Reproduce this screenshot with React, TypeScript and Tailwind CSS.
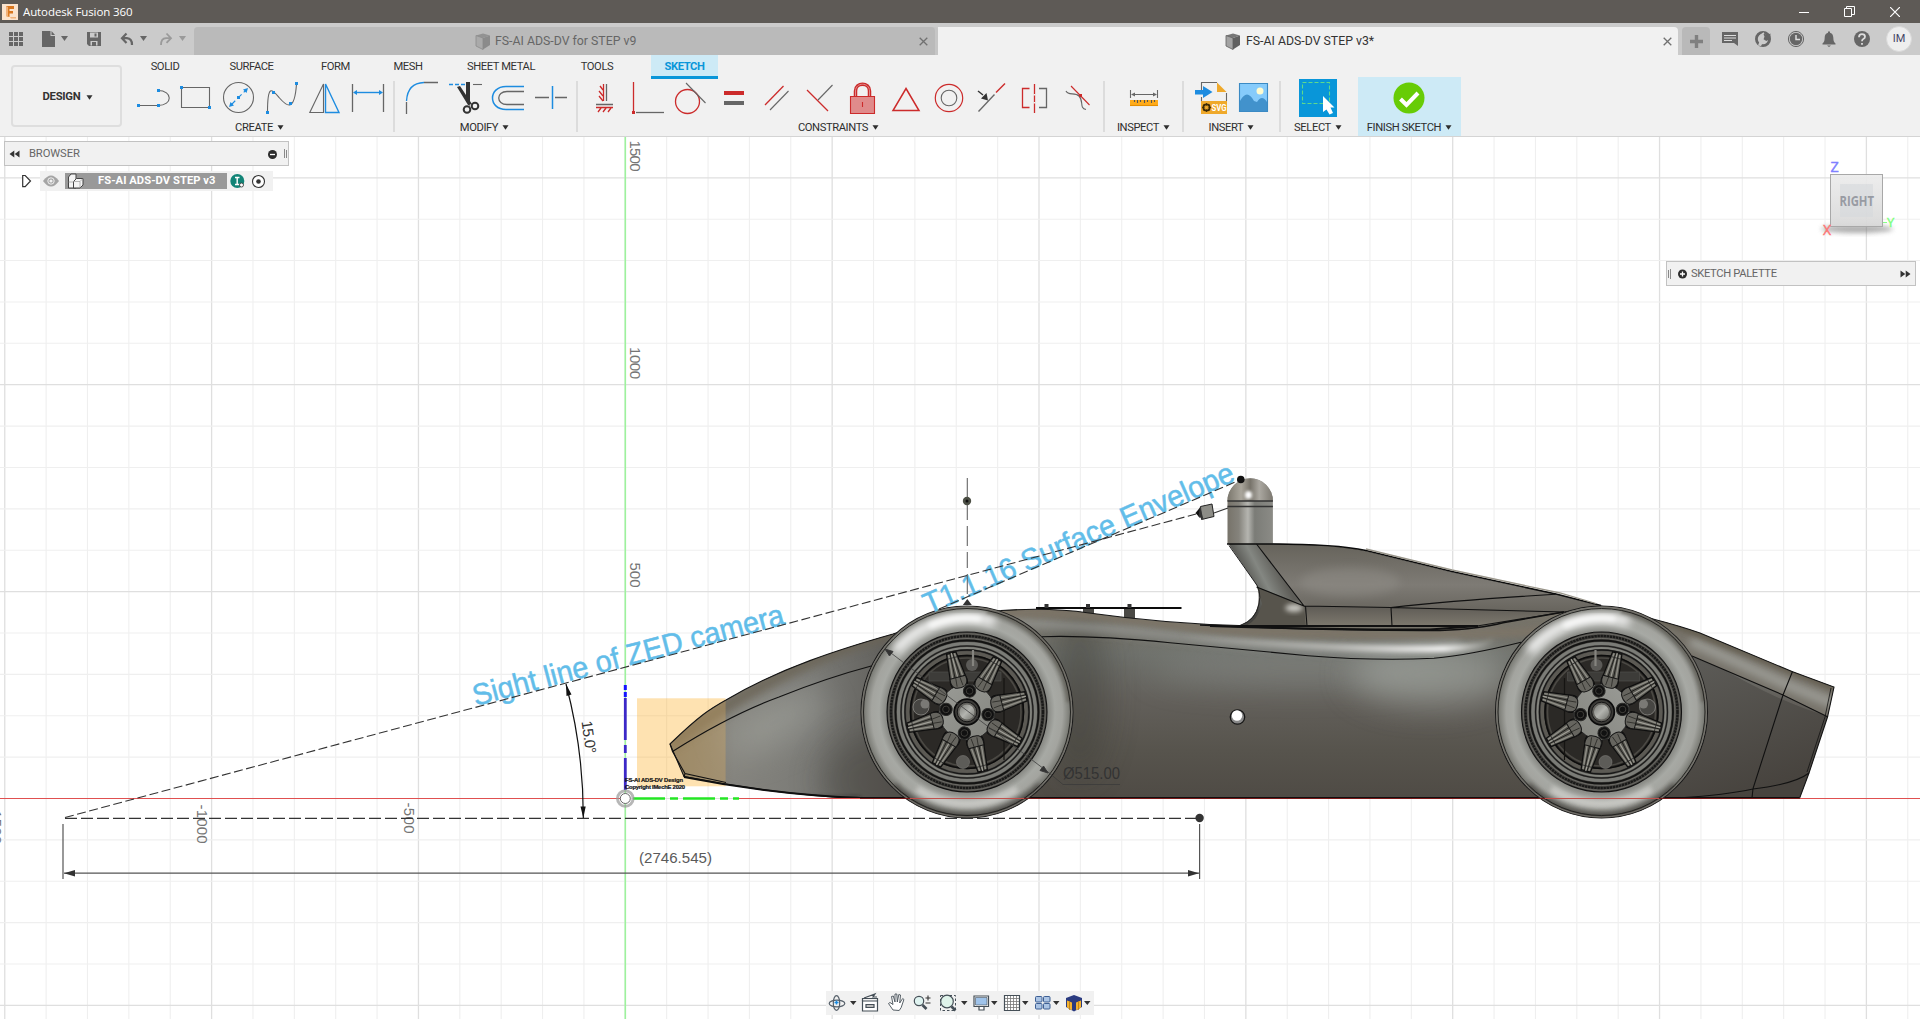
import React from "react";

const G = "#666666";
const B = "#1d8ce0";
const R = "#cc2b2b";

function Caret({ className = "" }: { className?: string }) {
  return <svg className={className} width="7" height="5" viewBox="0 0 7 5"><path d="M0.5 0.3h6L3.5 4.7z" fill="currentColor" /></svg>;
}

/* Icon cell whose local coordinates continue those of its neighbours in the ribbon */
function Cell({ x, w = 43, children }: { x: number; w?: number; children: React.ReactNode }) {
  return (
    <svg className="shrink-0" width={w} height="44" viewBox={`${x} 76 ${w} 44`} fill="none" strokeWidth="1.1">
      {children}
    </svg>
  );
}

const Dot = ({ x, y, c = B }: { x: number; y: number; c?: string }) => <rect x={x - 1.5} y={y - 1.5} width="3" height="3" fill={c} />;

function GroupLabel({ children }: { children: string }) {
  return (
    <div className="flex h-4 items-center justify-center gap-1 whitespace-nowrap text-[11.2px] leading-4 tracking-[-0.4px] text-[#2e2e2e]">
      <span>{children}</span>
      <Caret className="mb-0.5 shrink-0" />
    </div>
  );
}

function Group({ label, className, pad, labelPad = "", children }: { label: string; className: string; pad: string; labelPad?: string; children: React.ReactNode }) {
  return (
    <div className={`flex shrink-0 flex-col ${className}`}>
      <div className={`flex h-11 ${pad}`}>{children}</div>
      <div className={labelPad}><GroupLabel>{label}</GroupLabel></div>
    </div>
  );
}

const Sep = () => <div className="mt-[5px] h-[51px] w-0.5 shrink-0 bg-[#dcdcdc]" />;

function TitleBar() {
  return (
    <div className="flex h-[23px] items-center justify-between bg-[#5e5a56] text-white">
      <div className="flex items-center gap-[5px] pl-0.5 font-['Open_Sans',sans-serif] text-[11.5px] tracking-[-0.1px]">
        <svg width="16" height="16" viewBox="0 0 16 16">
          <rect width="16" height="16" fill="#fbe3cd" />
          <path d="M4 2h8v3H7.500v2H11v2.500H7.500V13L4 12z" fill="#d9771f" />
          <path d="M4 2l2 1v10l-2-1zM8 13h6v1.500H9z" fill="#f2b27a" />
        </svg>
        <span>Autodesk Fusion 360</span>
      </div>
      <div className="flex items-center gap-[35px] pr-5">
        <svg width="10" height="11" viewBox="0 0 10 11"><path d="M0 6.500h10" stroke="#fff" /></svg>
        <svg width="11" height="11" viewBox="0 0 11 11" fill="none" stroke="#fff"><path d="M.5 2.500h7v8h-7zM2.500 2.500v-2h8v8h-3" /></svg>
        <svg width="10" height="10" viewBox="0 0 10 10"><path d="M0 0l10 10M10 0L0 10" stroke="#fff" strokeWidth="1.200" /></svg>
      </div>
    </div>
  );
}

const Cube = ({ light, dark }: { light: string; dark: string }) => (
  <svg width="16" height="17" viewBox="0 0 16 17">
    <path d="M1 2.500L8 5v11.500L1 13z" fill={light} />
    <path d="M8 5l7-2.500V12L8 16.500z" fill={dark} />
    <path d="M1 2.500L8 .5l7 2L8 5z" fill={dark} opacity=".85" />
    <path d="M1 2.500L8 5v11.500L1 13z" fill="none" stroke={dark} strokeWidth=".8" />
  </svg>
);
const Close = () => <svg width="9" height="9" viewBox="0 0 9 9"><path d="M.7.7l7.600 7.600M8.300.7L.7 8.300" stroke="#707070" strokeWidth="1.300" /></svg>;

function TabBar() {
  return (
    <div className="flex h-8 bg-[#cbcbcb] text-[#666]">
      <svg className="shrink-0" width="194" height="32" viewBox="0 23 194 32" fill="none">
        {[9, 14, 19].map((x) => [32, 37, 42].map((y) => <rect key={`${x}${y}`} x={x} y={y} width="4" height="4" fill={G} />))}
        <path d="M42 31h8.500v5H55v11H42z M51.500 31l3.500 4h-3.500z" fill={G} />
        <path d="M61 36h7l-3.500 5z" fill={G} />
        <path d="M87 32h14v14H89l-2-2z" fill={G} />
        <path d="M90 32.500h8v5h-8zM90.500 45.500v-4.500h7v4.500" fill="#cbcbcb" />
        <path d="M94.500 33.500h2v3h-2zM92 42h4v4h-4z" fill={G} />
        <path d="M126.500 33.500l-4.500 4.700 4.500 4.700M122.500 38.200h4.500q5 .3 5 6.800" stroke={G} strokeWidth="2.200" />
        <path d="M140 36h7l-3.500 5z" fill={G} />
        <path d="M166.500 33.500l4.500 4.700-4.500 4.700M170.500 38.200h-4.500q-5 .3-5 6.800" stroke="#9a9a9a" strokeWidth="1.800" />
        <path d="M179 36h7l-3.500 5z" fill="#9a9a9a" />
      </svg>
      <div className="mt-1 flex h-7 w-[744px] shrink-0 rounded-t bg-[#c6c6c6]">
        <div className="flex w-[741px] items-center rounded-t bg-[#bababa] pl-[281px]">
          <div className="flex items-center gap-1 text-[12.3px]"><Cube light="#aaaaaa" dark="#8b8b8b" /><span className="whitespace-nowrap text-[#666]">FS-AI ADS-DV for STEP v9</span></div>
          <div className="ml-auto pr-[7px]"><Close /></div>
        </div>
      </div>
      <div className="mt-1 flex h-7 w-[740px] shrink-0 items-center rounded-tr bg-[#f1f1f1] pl-[287px]">
        <div className="flex items-center gap-[5px] text-[12.3px]"><Cube light="#a3a3a3" dark="#606060" /><span className="whitespace-nowrap text-[#333]">FS-AI ADS-DV STEP v3*</span></div>
        <div className="ml-auto pr-[6px]"><Close /></div>
      </div>
      <div className="ml-1 mt-1 flex h-7 w-7 shrink-0 items-center justify-center rounded-t bg-[#b9b9b9]">
        <svg width="14" height="14" viewBox="0 0 14 14"><path d="M7.500 1v13M1 7.500h13" stroke="#808080" strokeWidth="3.400" /></svg>
      </div>
      <svg className="shrink-0" width="170" height="32" viewBox="1710 23 170 32" fill="none">
        <path d="M1722 32h16v14l-4-3h-12z" fill={G} />
        <path d="M1724 35.500h12M1724 38h12M1724 40.500h8" stroke="#ddd" />
        <circle cx="1763" cy="39" r="6.600" stroke={G} strokeWidth="2.800" />
        <path d="M1763 33l1.500 3.500-1 3 3 1.500 3.500-2 .5-5.500-3.500 1.500z" fill={G} />
        <path d="M1758 45.500l2.500-6.500 4 .8-3.500 6.200z" fill="#cbcbcb" />
        <path d="M1759 39.500l2-4.500 3-2.200" stroke="#cbcbcb" strokeWidth="1.600" />
        <circle cx="1796" cy="39" r="7.600" stroke={G} strokeWidth="1" />
        <circle cx="1796" cy="39" r="6.200" fill={G} /><path d="M1796 35v4.500h4" stroke="#ddd" strokeWidth="1.500" />
        <path d="M1822.500 43.500c2-1.500 2-3 2.200-6 .3-3.500 2-4.500 3.300-4.800v-1.200h2v1.200c1.500.3 3 1.300 3.300 4.800.2 3 .2 4.500 2.200 6v1h-13zM1827 45.500h4l-2 1.500z" fill={G} />
        <circle cx="1862" cy="39" r="8" fill={G} />
        <path d="M1859 37.200q0-3 3-3t3 2.500q0 1.500-1.700 2.300-1.300.7-1.300 2.300M1862 43v1.800" stroke="#ddd" strokeWidth="1.800" />
      </svg>
      <div className="ml-[6px] mt-[3px] flex h-[26px] w-[26px] shrink-0 items-center justify-center rounded-full border border-[#d9d9d9] bg-[#eeeeee] text-[11px] text-[#446]">IM</div>
    </div>
  );
}

function Ribbon() {
  return (
    <div className="flex h-[82px] border-b border-[#d4d4d4] bg-[#f1f1f1]">
      <div className="flex w-[132px] shrink-0 pl-[11px] pt-[10px]">
        <div className="flex h-[62px] w-[111px] items-center justify-center gap-1.5 rounded border-2 border-[#dedede] pl-[3px] pt-0.5 text-[11.3px] font-bold tracking-[-0.3px] text-[#333]">
          <span>DESIGN</span><Caret />
        </div>
      </div>
      <div className="flex flex-col">
        <div className="flex h-6 items-stretch text-[11.2px] tracking-[-0.4px] text-[#333]">
          <span className="w-[66px] pt-1 text-center">SOLID</span>
          <span className="w-[107px] pt-1 text-center">SURFACE</span>
          <span className="w-[61px] pt-1 text-center">FORM</span>
          <span className="w-[84px] pt-1 text-center">MESH</span>
          <span className="w-[102px] pt-1 text-center">SHEET METAL</span>
          <span className="w-[90px] pt-1 text-center">TOOLS</span>
          <span className="ml-[9px] w-[67px] border-b-[3px] border-[#0996d9] bg-[#cdeaf6] pt-1 text-center font-bold text-[#0996d9]">SKETCH</span>
        </div>
        <div className="-mt-[3px] flex h-[60px]">
          <Group label="CREATE" className="w-[261px]" pad="" labelPad="pr-1.5">
            <Cell x={132}>
              <path d="M138 105.500h20c15 0 15-15 0-15" stroke={G} /><Dot x={138.500} y={105.500} /><Dot x={158.500} y={105.500} /><Dot x={158.500} y={90.500} />
            </Cell>
            <Cell x={175}><path d="M181.500 87.500h28v20h-28z" stroke={G} /><Dot x={181.500} y={87.500} /><Dot x={209.500} y={107.500} /></Cell>
            <Cell x={218}>
              <circle cx="238.500" cy="97.500" r="15" stroke={G} /><path d="M231 105l15-15" stroke={B} strokeDasharray="6 3" />
              <path d="M248 88l-1.500 5-3.500-3.500zM229 107l1.500-5 3.500 3.500z" fill={B} /><Dot x={238.500} y={97.500} />
            </Cell>
            <Cell x={261}><path d="M267.500 112c0-30 5-22 12-14s15 15 17-14" stroke={G} /><Dot x={267.500} y={112.500} /><Dot x={273.500} y={92.500} /><Dot x={290.500} y={103.500} /><Dot x={296.500} y={83.500} /></Cell>
            <Cell x={304}><path d="M323.500 84v28.500h-13.700z" stroke={G} /><path d="M325.500 84v28.500H339z" stroke={B} strokeWidth="1.400" /></Cell>
            <Cell x={347}><path d="M352.500 84v28M383.500 84v28" stroke={G} strokeWidth="1.300" /><path d="M355 92.500h26" stroke={B} strokeWidth="1.400" /><path d="M353 92.500l4-2.500v5zM383 92.500l-4-2.500v5z" fill={B} /></Cell>
          </Group>
          <Sep />
          <Group label="MODIFY" className="w-[181px]" pad="pl-[5px]" labelPad="pr-0.5">
            <Cell x={400}><path d="M406.500 114v-12M424 82.500h14" stroke={G} strokeWidth="1.300" /><path d="M406.500 101q1-18 17.500-18.500" stroke={B} strokeWidth="1.300" /></Cell>
            <Cell x={443}>
              <path d="M449 84.500h19" stroke={B} strokeWidth="1.300" strokeDasharray="4 2" /><path d="M473 84.500h9" stroke={G} />
              <path d="M457 87l3-1 12 18-4 1zM466 82h4v24l-4-4z" fill="#333" />
              <circle cx="467" cy="109.500" r="3.300" stroke="#333" strokeWidth="2" /><circle cx="475" cy="106" r="3.300" stroke="#333" strokeWidth="2" />
            </Cell>
            <Cell x={486}><path d="M524 86.500h-18c-18 0-18 23 0 23h18" stroke={B} strokeWidth="1.500" /><path d="M524 91.500h-17c-11 0-11 13 0 13h17" stroke={G} strokeWidth="1.300" /></Cell>
            <Cell x={529}><path d="M535 97.500h14M555 97.500h12" stroke={G} strokeWidth="1.300" /><path d="M552.500 86v23" stroke={B} strokeWidth="1.500" /></Cell>
          </Group>
          <Sep />
          <Group label="CONSTRAINTS" className="w-[525px]" pad="pl-[3px]" labelPad="pr-1">
            <Cell x={581}><path d="M603.500 84v17" stroke={R} strokeWidth="1.300" /><path d="M606.500 84v17M596 104.500h17" stroke={G} strokeWidth="1.300" /><path d="M596 107.500h17M600 86l3 4M599 91l4 5M599 96l4 5M598 112l3-4M603 112l3-4M608 112l3-4" stroke={R} strokeWidth="1.300" /></Cell>
            <Cell x={624}><path d="M633.500 82v29" stroke={R} strokeWidth="1.300" /><path d="M636 112.500h28" stroke={G} strokeWidth="1.300" /><Dot x={633.500} y={112.500} c={R} /></Cell>
            <Cell x={667}><circle cx="687.500" cy="101.500" r="12" stroke={R} strokeWidth="1.300" /><path d="M686 83l19.500 20" stroke={G} /></Cell>
            <Cell x={710}><path d="M724 91h20v4h-20z" fill={R} /><path d="M724 101h20v4h-20z" fill={G} /></Cell>
            <Cell x={753}><path d="M765 105l18.500-19" stroke={R} strokeWidth="1.300" /><path d="M770 110l18.500-19" stroke={G} /></Cell>
            <Cell x={796}><path d="M807 90l21 21" stroke={R} strokeWidth="1.300" /><path d="M818 100l14.500-15" stroke={G} /></Cell>
            <Cell x={839}><path d="M850.500 96.500h24v17h-24z" fill="#e08b8b" stroke={R} /><path d="M855.500 96v-5c0-9 14-9 14 0v5" stroke={R} strokeWidth="3.500" /><path d="M855.500 96v-5c0-9 14-9 14 0v5" stroke="#e08b8b" strokeWidth="1" /><path d="M862.500 102v5" stroke={R} /></Cell>
            <Cell x={882}><path d="M906 88.500l13 22h-26z" stroke={R} strokeWidth="1.500" /></Cell>
            <Cell x={925}><circle cx="949" cy="98" r="13.700" stroke={R} strokeWidth="1.200" /><circle cx="949" cy="98" r="7.800" stroke={G} /></Cell>
            <Cell x={968}><path d="M978.500 111.500l16-17" stroke={G} strokeWidth="1.300" /><path d="M996 92.500l9-9" stroke={R} strokeWidth="1.400" /><path d="M978 91l5 4" stroke="#333" strokeWidth="1.500" /><path d="M988 100.500l-7-2 5.500-5.500z" fill="#333" /></Cell>
            <Cell x={1011}><path d="M1029.500 88.500h-7v19h7M1034.500 84v29" stroke={R} strokeWidth="1.300" /><path d="M1034.500 94v1.500M1034.500 102v1.500" stroke="#f1f1f1" strokeWidth="2" /><path d="M1039 88.500h7.500v19h-7.500" stroke={G} strokeWidth="1.300" /></Cell>
            <Cell x={1054}><path d="M1066 91c2 5 9 1 13 5 5 5 0 12 7 13.500" stroke={G} /><path d="M1071 86l18.500 19" stroke={R} /><Dot x={1080.500} y={95.500} c={R} /></Cell>
          </Group>
          <Sep />
          <Group label="INSPECT" className="w-[77px]" pad="pl-[17px]">
            <Cell x={1122}><path d="M1130 100h28v6h-28z" fill="#ffab1a" /><path d="M1130 105.500h28" stroke="#e68f00" /><path d="M1130.500 90v8M1157.500 90v8M1133 94.500h22" stroke={G} /><path d="M1131 94.500l4-2v4zM1157 94.500l-4-2v4z" fill={G} /><path d="M1134.500 100v2M1137.500 100v3M1140.500 100v2M1144.500 100v3M1147.500 100v2M1151.500 100v3M1154.500 100v2" stroke="#555" /></Cell>
          </Group>
          <Sep />
          <Group label="INSERT" className="w-[95px]" pad="pl-1">
            <Cell x={1188}>
              <path d="M1201.500 90v-7.500H1217M1201.500 97v4M1226.500 93v8" stroke={G} /><path d="M1217 82.500l9.500 9.500h-9.500z" fill="#efa92b" />
              <path d="M1195 90h8v-4l9.500 6-9.500 6v-3.500h-8z" fill={B} /><path d="M1201 101h26v13h-26z" fill="#efa92b" />
              <circle cx="1206.500" cy="107.500" r="3.200" stroke="#3b2a05" strokeWidth="1.800" /><path d="M1206.500 103v9M1202 107.500h9M1203.500 104.500l6 6M1209.500 104.500l-6 6" stroke="#3b2a05" strokeWidth=".8" /><circle cx="1206.500" cy="107.500" r="1.800" fill="#efa92b" />
              <text x="1211.500" y="111" fontSize="8.500" fontWeight="700" fill="#fff" stroke="none" textLength="15" lengthAdjust="spacingAndGlyphs">SVG</text>
            </Cell>
            <Cell x={1231}><path d="M1239.500 83.500h28v28h-28z" fill="#86cbfb" /><path d="M1240 101q7-13 14 0l3 1q5-8 10 0v9h-27z" fill="#4292cc" /><circle cx="1260" cy="91" r="3.500" fill="#fffbd0" /><path d="M1239.500 83.500h28v28h-28z" stroke="#3b8ac4" /></Cell>
          </Group>
          <Sep />
          <Group label="SELECT" className="w-[76px]" pad="pl-[15px]" labelPad="pr-0.5">
            <Cell x={1296} w={44}><path d="M1299 79h38v38h-38z" fill="#0996d9" /><path d="M1302.500 82.500h27v21h-27z" stroke="#5fd98c" strokeDasharray="4 2" /><path d="M1323 96v16l3.500-2.500 3 5 3.500-1.500-2.500-5.500h4z" fill="#fff" /></Cell>
          </Group>
          <div className="ml-px mt-px flex h-[59px] w-[103px] shrink-0 flex-col items-center bg-[#cdeaf6]">
            <svg className="shrink-0" width="43" height="43" viewBox="1388 77 43 43"><circle cx="1409" cy="98" r="15.500" fill="#67cc06" /><path d="M1400.500 99l6 6 11.500-12" fill="none" stroke="#fff" strokeWidth="4" /></svg>
            <GroupLabel>FINISH SKETCH</GroupLabel>
          </div>
        </div>
      </div>
    </div>
  );
}

const range = (a: number, b: number) => Array.from({ length: b - a + 1 }, (_, i) => a + i);

function Grid() {
  return (
    <g>
      {range(-15, 31).map((i) => <line key={`v${i}`} x1={625.3 + i * 41.37} x2={625.3 + i * 41.37} y1="137" y2="1019" stroke={i % 5 === 0 ? "#dfdfdf" : "#efefef"} strokeWidth={i % 5 === 0 ? 1.3 : 1.1} />)}
      {range(-15, 5).map((i) => <line key={`h${i}`} y1={798.5 + i * 41.38} y2={798.5 + i * 41.38} x1="0" x2="1920" stroke={i % 5 === 0 ? "#dfdfdf" : "#efefef"} strokeWidth={i % 5 === 0 ? 1.2 : 1.1} />)}
      <path d="M625.300 137V1019" stroke="#9df29d" strokeWidth="1.600" />
    </g>
  );
}

function Wheel({ cx, flip }: { cx: number; flip?: boolean }) {
  return (
    <g transform={`translate(${cx} 712)`} fill="none">
      <circle r="106" fill="url(#tyre)" stroke="#1a1a1a" strokeWidth="1.100" />
      <g clipPath="url(#tyreClip)">
        <path d="M-72 -61A95 95 0 0 1 28 -90" stroke="#fff" strokeWidth="10" opacity=".85" filter="url(#b5)" />
        <path d="M-38 -86A94 94 0 0 1 14 -93" stroke="#fff" strokeWidth="6" opacity=".8" filter="url(#b3)" />
        <path d="M-50 77A92 92 0 0 0 50 77" stroke="#dededa" strokeWidth="7" opacity=".65" filter="url(#b3)" />
        <path d="M-75 75A106 106 0 0 0 75 75" stroke="#3d3b37" strokeWidth="11" opacity=".7" filter="url(#b3)" />
        <path d="M20 -102A104 104 0 0 1 103 -10" stroke="#5a5750" strokeWidth="7" opacity=".55" filter="url(#b2)" />
      </g>
      <circle r="103.500" stroke="#1c1c1a" strokeWidth=".9" />
      <circle r="105" stroke="#77756f" strokeWidth="1" />
      <circle r="80" fill="#4b4a46" stroke="#111" strokeWidth="1.100" />
      <circle r="78.300" stroke="#686762" strokeWidth="1" />
      <circle r="76" stroke="#191918" strokeWidth="2.500" strokeDasharray="2.500 .6" />
      <circle r="73.500" stroke="#6a6964" strokeWidth="1" />
      <circle r="71.500" stroke="#131312" strokeWidth="1.800" />
      <circle r="68.500" stroke="#7b7c77" strokeWidth="3.200" />
      <circle r="66" stroke="#1b1b1b" strokeWidth="1.100" />
      <circle r="64" stroke="#83847e" strokeWidth="1.800" />
      <circle r="62" stroke="#161616" strokeWidth="1.300" />
      <circle r="59" fill="#2b2926" stroke="#5c5a54" strokeWidth="3.500" />
      <circle r="56.500" stroke="#0c0c0c" strokeWidth="1.600" />
      <circle r="54" stroke="#4b4944" strokeWidth="1.600" />
      <g transform={flip ? "scale(-1 1)" : undefined}>
        <path d="M-38 -40h72v9h-72z" fill="#3d3c39" stroke="#4f4e4a" strokeWidth=".7" />
        <path d="M37 -34v82" stroke="#151412" strokeWidth="1.200" />
        <circle cx="-46" cy="-5" r="8" fill="#474643" stroke="#8a8985" strokeWidth=".8" /><circle cx="-42" cy="-8" r="4.500" fill="#7a7975" />
        <circle cx="5" cy="-47" r="6" fill="#5b5a57" /><path d="M6 -62v16" stroke="#85847f" strokeWidth="2.200" />
        <circle cx="-4" cy="50" r="6.500" fill="#5d5c58" stroke="#7c7b77" strokeWidth=".6" />
        {range(0, 7).map((k) => (
          <g key={k} transform={`rotate(${-15 + 45 * k})`}>
            <path d="M26 -7Q30 -9.500 35 -8L61 -4.800V4.800L35 8Q30 9.500 26 7z" fill="#595852" stroke="#0e0e0e" strokeWidth="1.200" />
            <path d="M33 -5.500L60 -3M33 5.500L60 3" stroke="#8f8e86" strokeWidth="1.400" />
            <path d="M32 -3L61 -1.300M32 3L61 1.300" stroke="#161614" strokeWidth=".8" />
            <path d="M32 0H61" stroke="#a09f97" strokeWidth="1.300" />
            <path d="M56 -5v10" stroke="#222" strokeWidth=".7" />
          </g>
        ))}
        <circle r="28" fill="url(#hub)" stroke="#222" strokeWidth=".8" />
        {range(0, 7).map((k) => (
          <g key={k} transform={`rotate(${-15 + 45 * k})`}>
            <path d="M36 -8Q28 -9 26 -5 24 0 26 5 28 9 36 8z" fill="#66655f" stroke="#141414" strokeWidth="1" />
            <path d="M27 -3L37 -2M27 3L37 2" stroke="#23231f" strokeWidth=".7" />
          </g>
        ))}
        {range(0, 3).map((k) => (
          <g key={k} transform={`rotate(${7 + 90 * k})`}>
            <circle cx="21.200" r="6.200" fill="#111" stroke="#2c2c2a" /><circle cx="21.200" r="3.300" stroke="#45443f" strokeWidth=".8" />
          </g>
        ))}
      </g>
      <circle r="12.800" fill="#3c3b38" stroke="#0c0c0c" strokeWidth="1.800" />
      <circle r="9.800" fill="#62615c" stroke="#151515" strokeWidth="1" />
      <circle r="7.500" fill="url(#cap)" />
    </g>
  );
}

const BODY = "M670 744C700 715 710 709 726 700C780 668 840 649 893 634L960 612L1001 610.500C1030 608.500 1062 609 1089 613C1140 620 1180 624 1239 625.500L1477 626L1564 612L1601 606L1653 619Q1680 626 1700 633L1792 671.500L1834 687L1827.500 717L1809 773L1799.500 798.500H860Q770 794 684 776.500z";

function Car() {
  return (
    <g fill="none">
      {/* cockpit tower and engine cover */}
      <path d="M1256 544L1273 543.500C1310 544 1345 546 1366 551L1452 572 1556 594 1601 606 1600 640H1240L1239 625.500Q1262 618 1258 590z" fill="url(#cover)" />
      <ellipse cx="1350" cy="582" rx="50" ry="14" fill="#918e88" opacity=".5" filter="url(#b5)" />
      <path d="M1228.500 544H1257L1304 606V626H1240Q1258 618 1260 597 1260 590 1254 581z" fill="url(#neck)" />
      <path d="M1262 604Q1258 620 1246 626H1306V606L1257 587z" fill="#57544c" />
      <ellipse cx="1294" cy="608" rx="9" ry="4" fill="#c9c8c2" filter="url(#b3)" />
      <path d="M1304 606L1391 607.500 1564 612 1500 626H1306z" fill="url(#rail)" />
      <path d="M1227.500 544V501a22.700 22.700 0 0 1 45.400 0V544z" fill="url(#tower)" />
      <path d="M1227.500 501a22.700 22.700 0 0 1 45.400 0z" fill="url(#dome)" />
      <ellipse cx="1248.500" cy="495" rx="3.500" ry="4" fill="#fff" filter="url(#b2)" />
      <path d="M1227.500 501h45.400M1227.500 506.500h45.400" stroke="#333" strokeWidth="1.600" />
      <path d="M1227 544H1273C1310 544 1345 546 1366 550.500L1452 571.500 1556 594 1601 605.500" stroke="#0c0c0c" strokeWidth="1.600" />
      <path d="M1366 549L1452 570 1560 593 1596 603.500" stroke="#99958a" strokeWidth="1.300" />
      <path d="M1229 545.500L1254 581Q1262 590 1259 604 1256 620 1240 625.500" stroke="#222" strokeWidth="1" />
      <g stroke="#111" strokeWidth="1.100">
        <path d="M1256.500 544L1304 606 1256.500 587M1304 606L1391 607.500 1564 612M1391 607.500Q1460 600 1555.600 594.300M1305.500 606L1307 626M1391 607.500L1392 626" />
      </g>
      {/* roof sensor tray */}
      <path d="M1083 608h11v8h-11zM1124 608h11v11h-11z" fill="#4a4945" />
      <path d="M1036 608H1181.500" stroke="#0c0c0c" strokeWidth="2.200" />
      <path d="M1044.500 604h4v4h-4zM1086 604h4v4h-4zM1127.500 604h4v4h-4z" fill="#333" />

      {/* main body */}
      <path d={BODY} fill="url(#body)" />
      <g clipPath="url(#bodyClip)">
        <rect x="660" y="600" width="330" height="200" fill="url(#nose)" />
        <ellipse cx="775" cy="722" rx="55" ry="22" transform="rotate(-28 775 722)" fill="#a8aaa4" opacity=".5" filter="url(#b12)" />
        <ellipse cx="880" cy="780" rx="60" ry="50" fill="#3f3d39" opacity=".45" filter="url(#b12)" />
        <path d="M670 744Q780 662 900 630" stroke="#6b6455" strokeWidth="14" opacity=".8" filter="url(#b5)" />
        <ellipse cx="1300" cy="668" rx="150" ry="16" fill="#8f938e" opacity=".5" filter="url(#b12)" />
        <ellipse cx="1430" cy="675" rx="80" ry="30" fill="#a6aaa4" opacity=".6" filter="url(#b12)" />
        <ellipse cx="1080" cy="690" rx="28" ry="90" fill="#3e3c37" opacity=".45" filter="url(#b12)" />
        <path d="M1000 622Q1090 626 1160 634T1300 646 1400 648 1460 642" stroke="#989a96" strokeWidth="10" opacity=".75" filter="url(#b5)" />
        <path d="M1180 636Q1300 648 1400 649T1490 637" stroke="url(#gleam)" strokeWidth="6" filter="url(#b3)" />
        <path d="M1000 612Q1090 612 1170 624T1440 634 1570 614" stroke="#7d7567" strokeWidth="9" opacity=".9" filter="url(#b3)" />
        <path d="M1640 612Q1740 690 1830 717L1800 800H1640z" fill="url(#tail)" />
        <path d="M1655 615L1692 656 1783 695 1829 717 1836 686 1792 670z" fill="#77736a" />
        <path d="M1690 641L1790 686 1835 704" stroke="#a9aaa5" strokeWidth="10" opacity=".75" filter="url(#b5)" />
        <path d="M1660 618L1792 670 1834 687" stroke="#615a4b" strokeWidth="8" opacity=".8" filter="url(#b3)" />
        <path d="M680 790Q780 803 860 800" stroke="#222" strokeWidth="5" filter="url(#b3)" />
        <rect x="637" y="698.300" width="88.600" height="88" fill="#dcae60" fillOpacity=".34" />
      </g>
      <path d={BODY} stroke="#161616" strokeWidth="1.100" />
      <path d="M684 777Q770 794 860 798H1799" stroke="#0f0f0f" strokeWidth="2" />
      <g stroke="#111" strokeWidth="1.100">
        <path d="M672.500 751.500Q730 715 779 697 826 678 873 665.500M670 744L672.500 751.500 685 773.500 726 782.500M685 773.500L684 777" />
        <path d="M1042 636.700Q1090 635 1170 642.700L1308 655.700Q1373 661 1434 658.300 1470 655 1521 642.300" />
        <path d="M1200 625Q1330 631 1440 630.500 1480 629 1503 622.700L1564 612" strokeWidth="1.400" />
        <path d="M1210 626Q1330 630 1430 629.500L1478 626H1239" strokeWidth="2" />
        <path d="M1692 656L1783 695 1828 717M1792.500 671.500L1783 695 1753 788.500 1752 798M1681 797.700Q1725 795 1753 789 1795 784 1809 773" />
        <path d="M1831 688L1825 717 1807 772" strokeWidth=".8" />
      </g>
      <circle cx="1237.500" cy="717" r="7.200" fill="#888" stroke="#161616" strokeWidth="1.300" />
      <circle cx="1237" cy="715.500" r="5.200" fill="#fff" />
      <Wheel cx={967} />
      <Wheel cx={1601.5} flip />
    </g>
  );
}

function Annotations() {
  return (
    <g fill="none" stroke="#444" fontFamily="'Liberation Sans', sans-serif">
      <path d="M0 798.500H625M735 798.500H1920" stroke="#e05050" strokeWidth="1" />
      <path d="M860 798.500H1800" stroke="#7a1818" strokeWidth="1.200" />
      <path d="M910 798.500H1024M1545 798.500H1659" stroke="#c0504c" strokeWidth="1" />
      <path d="M633 798.500H739" stroke="#24e624" strokeWidth="2.600" strokeDasharray="32 5 8 5" />
      <path d="M625.300 685v13" stroke="#1414ff" strokeWidth="3" strokeDasharray="5 2" />
      <path d="M625.300 698V790" stroke="#3c28c8" strokeWidth="2.800" strokeDasharray="42 5 8 5" />
      <g stroke="none" fill="#757575" fontSize="15">
        <text transform="translate(630 140.500) rotate(90)" textLength="31">1500</text>
        <text transform="translate(630 347) rotate(90)" textLength="32">1000</text>
        <text transform="translate(630 562.500) rotate(90)" textLength="25">500</text>
        <text transform="translate(197 804.500) rotate(90)" textLength="39">-1000</text>
        <text transform="translate(404 802.500) rotate(90)" textLength="31">-500</text>
        <text transform="translate(-9 805) rotate(90)" textLength="39">-1500</text>
        <text x="639" y="862.500" fontSize="15.500" textLength="73" lengthAdjust="spacingAndGlyphs" fill="#5a5a5a">(2746.545)</text>
        <text transform="translate(581.500 721.500) rotate(82)" fontSize="15" textLength="33" fill="#333">15.0°</text>
        <text x="1063" y="778.500" fontSize="16" textLength="57" lengthAdjust="spacingAndGlyphs" fill="#333">Ø515.00</text>
      </g>
      <g stroke="#62bde9" strokeWidth=".5" fill="#62bde9" fontSize="30">
        <text transform="translate(475.500 706) rotate(-14.800)" textLength="321" lengthAdjust="spacingAndGlyphs">Sight line of ZED camera</text>
        <text transform="translate(928.500 614.500) rotate(-23.500)" textLength="336" lengthAdjust="spacingAndGlyphs">T1.1.16 Surface Envelope</text>
      </g>
      <g stroke="#333" strokeWidth="1.100">
        <path d="M65 817.500L1196 514" strokeDasharray="9 3.500" />
        <path d="M939 609L1240 480" strokeDasharray="9 3.500" />
        <path d="M65 818.300H1199" strokeDasharray="12 4" strokeWidth="1.300" />
        <path d="M967.300 478V604" strokeDasharray="20 6 16 6" stroke="#666" />
        <path d="M1214 513L1228 508" />
      </g>
      <path d="M63 824V879M1199.600 824V879M64 873.200H1199" stroke="#555" strokeWidth="1.200" />
      <path d="M64 873.200l11-3.200v6.400zM1199 873.200l-11-3.200v6.400z" fill="#333" stroke="none" />
      <path d="M566 684A518 518 0 0 1 583.300 818" stroke="#111" strokeWidth="1.200" />
      <path d="M566 684l.5 12 5-1.500zM583.300 818l-2.800-11.500h5.200z" fill="#111" stroke="none" />
      <g stroke="#3a3a3a" strokeWidth="1">
        <path d="M887 650L1048 772 1063 784.500H1120" opacity=".75" />
        <path d="M885 649l8 2.500-3.500 4.500zM1048 773l-8-2.500 3.500-4.500z" fill="#333" />
      </g>
      <g stroke="none" fill="#111">
        <circle cx="967" cy="501" r="4.200" fill="#4c4f45" /><circle cx="967" cy="501" r="1.500" />
        <path d="M967.300 599l4.500 6h-9z" fill="#333" />
        <circle cx="1199.600" cy="818" r="4.200" fill="#333" /><circle cx="1240.800" cy="479.500" r="3.800" />
        <path d="M1195.500 513l4.500-5.500v10.500z" /><path d="M1200.500 506.500l11.500-2.500 2 12.500-12.500 3z" fill="#8d8d87" stroke="#222" />
        <path d="M1200 506.500l3.500 13-5-3z" fill="#333" />
        <text x="625" y="782" fontSize="5.900" fontWeight="700" textLength="58" stroke="#111" strokeWidth=".2">FS-AI ADS-DV Design</text>
        <text x="625" y="789" fontSize="5.900" fontWeight="700" textLength="60" stroke="#111" strokeWidth=".2">Copyright IMechE 2020</text>
      </g>
      <circle cx="625.300" cy="798.500" r="7.800" stroke="#999" strokeWidth="3" opacity=".7" />
      <circle cx="625.300" cy="798.500" r="5" fill="#fff" stroke="#666" />
    </g>
  );
}

function Viewport() {
  return (
    <svg className="block" width="1920" height="882" viewBox="0 137 1920 882">
      <defs>
        <filter id="b2" x="-50%" y="-50%" width="200%" height="200%"><feGaussianBlur stdDeviation="1.500" /></filter>
        <filter id="b3" x="-50%" y="-50%" width="200%" height="200%"><feGaussianBlur stdDeviation="2.500" /></filter>
        <filter id="b5" x="-50%" y="-50%" width="200%" height="200%"><feGaussianBlur stdDeviation="4.500" /></filter>
        <filter id="b12" x="-100%" y="-150%" width="300%" height="400%"><feGaussianBlur stdDeviation="16" /></filter>
        <radialGradient id="tyre" gradientUnits="userSpaceOnUse" cx="0" cy="0" r="106">
          <stop offset=".75" stopColor="#83847f" /><stop offset=".83" stopColor="#a7a9a4" /><stop offset=".9" stopColor="#a3a49f" /><stop offset=".96" stopColor="#80817b" /><stop offset="1" stopColor="#5c5a54" />
        </radialGradient>
        <clipPath id="tyreClip"><circle r="106" /></clipPath>
        <clipPath id="bodyClip"><path d={BODY} /></clipPath>
        <linearGradient id="gleam" gradientUnits="userSpaceOnUse" x1="1180" y1="0" x2="1490" y2="0"><stop stopColor="#f4f3ef" stopOpacity="0" /><stop offset=".5" stopColor="#f4f3ef" stopOpacity=".45" /><stop offset=".85" stopColor="#fff" stopOpacity="1" /><stop offset="1" stopColor="#f4f3ef" stopOpacity=".1" /></linearGradient>
        <linearGradient id="hub" x1="0" y1="0" x2="1" y2="1"><stop stopColor="#9a9b96" /><stop offset="1" stopColor="#84857f" /></linearGradient>
        <linearGradient id="cap" x1="0" y1="0" x2="1" y2="1"><stop stopColor="#7c7d78" /><stop offset=".5" stopColor="#b3b4af" /><stop offset="1" stopColor="#72736d" /></linearGradient>
        <linearGradient id="body" gradientUnits="userSpaceOnUse" x1="0" y1="606" x2="0" y2="798">
          <stop stopColor="#7a7468" /><stop offset=".25" stopColor="#6f716c" /><stop offset=".5" stopColor="#625f5a" /><stop offset=".75" stopColor="#57544d" /><stop offset="1" stopColor="#4f4b45" />
        </linearGradient>
        <linearGradient id="nose" gradientUnits="userSpaceOnUse" x1="670" y1="0" x2="990" y2="0">
          <stop stopColor="#7d7768" /><stop offset=".2" stopColor="#85847e" /><stop offset=".45" stopColor="#7a7a76" /><stop offset=".85" stopColor="#4f4d49" /><stop offset="1" stopColor="#4f4d49" stopOpacity="0" />
        </linearGradient>
        <linearGradient id="tail" gradientUnits="userSpaceOnUse" x1="1690" y1="660" x2="1740" y2="800"><stop stopColor="#5c5b57" /><stop offset="1" stopColor="#47433e" /></linearGradient>
        <linearGradient id="cover" gradientUnits="userSpaceOnUse" x1="0" y1="544" x2="0" y2="612"><stop stopColor="#66635b" /><stop offset=".6" stopColor="#7e7b75" /><stop offset="1" stopColor="#67645d" /></linearGradient>
        <linearGradient id="rail" gradientUnits="userSpaceOnUse" x1="0" y1="606" x2="0" y2="626"><stop stopColor="#5e5b55" /><stop offset="1" stopColor="#7d796e" /></linearGradient>
        <linearGradient id="neck" gradientUnits="userSpaceOnUse" x1="1240" y1="580" x2="1275" y2="562"><stop stopColor="#44433f" /><stop offset=".55" stopColor="#848782" /><stop offset="1" stopColor="#5e5d58" /></linearGradient>
        <linearGradient id="tower"><stop stopColor="#77736a" /><stop offset=".25" stopColor="#85837c" /><stop offset=".45" stopColor="#b5b5b0" /><stop offset=".6" stopColor="#7b7c77" /><stop offset="1" stopColor="#8b8b86" /></linearGradient>
        <linearGradient id="dome"><stop stopColor="#7b776d" /><stop offset=".3" stopColor="#aaa69c" /><stop offset=".5" stopColor="#77736a" /><stop offset=".7" stopColor="#aba8a1" /><stop offset="1" stopColor="#7c7870" /></linearGradient>
        <linearGradient id="cube" x1="0" y1="0" x2="0" y2="1"><stop stopColor="#ececec" /><stop offset="1" stopColor="#d8d8d8" /></linearGradient>
      </defs>
      <rect y="137" width="1920" height="882" fill="#fff" />
      <Grid />
      <rect x="637" y="698.300" width="88.600" height="88" fill="#fba919" fillOpacity=".34" />
      <Car />
      <Annotations />
      <g fontFamily="'Open Sans', sans-serif">
        <ellipse cx="1857" cy="229" rx="36" ry="4" fill="#777" opacity=".6" filter="url(#b3)" />
        <rect x="1830.500" y="174.500" width="52" height="52" fill="url(#cube)" fillOpacity=".93" stroke="#a8a8a8" />
        <rect x="1840" y="184" width="33" height="33" fill="#d6d8dc" opacity=".6" />
        <text x="1839.500" y="205.500" fontSize="14.500" fontWeight="700" fill="#989ba3" textLength="34.500" lengthAdjust="spacingAndGlyphs">RIGHT</text>
        <text x="1830.500" y="171.500" fontSize="14.500" fill="#8080ff" stroke="#8080ff" strokeWidth=".4">Z</text>
        <text x="1823" y="235" fontSize="14" fill="#ff7373" stroke="#ff7373" strokeWidth=".4">X</text>
        <text x="1887" y="227" fontSize="13" fill="#7dff7d" stroke="#7dff7d" strokeWidth=".4">Y</text>
        <path d="M1883 222.500h4" stroke="#8f8" />
      </g>
    </svg>
  );
}

function NavBar() {
  return (
    <div className="absolute left-[826px] top-[854px] h-6 w-[268px] bg-[#f1f1f1]">
      <svg width="268" height="24" viewBox="826 991 268 24" fill="none" stroke="#454f57" strokeWidth="1.200">
        <ellipse cx="837" cy="1003.500" rx="7.800" ry="3.300" stroke="#56606a" /><ellipse cx="836.500" cy="1003" rx="3.200" ry="7.300" stroke="#56606a" /><path d="M834.500 1002.500h4M836.500 1000.500v4" stroke="#1d8ce0" strokeWidth="1.500" />
        <path d="M862.500 1001h15v10h-15z" fill="#fff" /><path d="M866 1004.500h8v3h-8z" fill="#bbb" /><path d="M864 998l11-4-2 3h4M862.500 1001v-2.500h15v2.500" />
        <path d="M893 1010l-4.500-6.500 1.500-1 3 2-1.500-8 1.800-.5 1.700 6v-8h1.800l.5 8 1.500-7.500 1.700.5-.8 8 3-4.500 1.200 1-2.700 8-2 3z" fill="#fff" strokeWidth=".9" />
        <circle cx="919" cy="1001" r="4.700" fill="#dff3f0" /><path d="M922.500 1005l4 4" strokeWidth="2.600" /><path d="M925.500 998h5M928 995.500v5M925.500 1003h5" stroke="#333" strokeWidth="1.100" />
        <path d="M940.500 995.500h15v15h-15z" strokeDasharray="2.500 2" strokeWidth="1" /><circle cx="947" cy="1001.500" r="6.300" fill="#dff3ea" /><path d="M951.500 1006.500l4 4" strokeWidth="2.600" />
        <path d="M974 996h14.500v10.500H974z" fill="#fff" /><path d="M975.500 997.500h11.500v7.500h-11.500z" fill="#9fc3ea" strokeWidth=".6" /><path d="M979 1007v3h5v-3" fill="#fff" />
        <path d="M1004.500 995.500h15v15h-15z" fill="#fff" /><path d="M1007.500 996v14M1010.500 996v14M1013.500 996v14M1016.500 996v14M1005 998.500h14M1005 1001.500h14M1005 1004.500h14M1005 1007.500h14" strokeWidth=".8" stroke="#777" />
        <g fill="#abc4e4" stroke="#3d5f94" strokeWidth="1"><rect x="1035.500" y="996.500" width="6.500" height="5.500" rx="1" /><rect x="1043.500" y="996.500" width="6.500" height="5.500" rx="1" /><rect x="1035.500" y="1003.500" width="6.500" height="5.500" rx="1" /><rect x="1043.500" y="1003.500" width="6.500" height="5.500" rx="1" /></g>
        <g stroke="none"><path d="M1066 998l8-3 8 3v9l-8 4.500-8-4.500z" fill="#2b3b80" /><path d="M1067 1000.500l5 2v7.800l-5-2.800z" fill="#f5b32f" /><path d="M1076 1002.500l5-2v7l-5 2.800z" fill="#f5b32f" /><path d="M1069.500 1001v9M1078.500 1001v9" stroke="#b57a14" strokeWidth=".8" /></g>
        <g fill="#333" stroke="none"><path d="M850 1001h6.500l-3.200 4zM961 1001h6.500l-3.200 4zM991 1001h6.500l-3.200 4zM1022 1001h6.500l-3.200 4zM1053 1001h6.500l-3.200 4zM1084 1001h6.500l-3.200 4z" /></g>
      </svg>
    </div>
  );
}

export default function App() {
  return (
    <div className="flex h-[1019px] w-[1920px] flex-col overflow-hidden bg-white font-['Roboto','Liberation_Sans',sans-serif]">
      <TitleBar />
      <TabBar />
      <Ribbon />
      <main className="relative h-[882px] overflow-hidden">
        <Viewport />
        <div className="absolute left-1 top-1 flex h-[25px] w-[285px] items-center border border-[#c2c2c2] bg-[#f1f1f1] pl-1 pr-[1px] text-[11.2px] tracking-[-0.1px] text-[#666]">
          <svg width="11" height="8" viewBox="0 0 11 8"><path d="M5.300.5v7L.5 4zM10.500.5v7L5.700 4z" fill="#333" /></svg>
          <span className="ml-[9px] pt-px">BROWSER</span>
          <svg className="ml-auto" width="20" height="14" viewBox="0 0 20 14"><circle cx="5.500" cy="7.500" r="4.500" fill="#2d2d2d" /><path d="M3 7.500h5" stroke="#fff" strokeWidth="1.300" /><path d="M17.500 2v9M19.500 3v8" stroke="#888" /></svg>
        </div>
        <div className="absolute left-[21px] top-[34px] flex h-5 items-center">
          <svg width="19" height="20" viewBox="0 0 19 20"><path d="M1.700 4.500h2.500L9.500 10l-5.300 5.700H1.700z" fill="#fff" stroke="#333" strokeWidth="1.200" /></svg>
          <div className="flex h-5 w-[233px] items-center bg-[#f1f1f1]">
            <svg className="ml-[3px]" width="16" height="12" viewBox="0 0 16 12"><path d="M0 6Q8-5 16 6 8 17 0 6z" fill="#a5a5a5" /><circle cx="8" cy="6" r="3.200" fill="none" stroke="#f1f1f1" /><circle cx="8" cy="6" r="1.600" fill="#f1f1f1" /></svg>
            <div className="ml-[6px] flex h-4 w-[162px] items-center bg-[#999]">
              <svg className="ml-[3px]" width="16" height="16" viewBox="0 0 16 16" fill="#f4f4f4" stroke="#444"><path d="M.5 4L3 1h5v14H.5z" /><path d="M5.500 8.500L8.500 5.500h6.500V12l-3 3H5.500z" /><path d="M5.500 8.500H12V15M12 8.500l3-3M.5 9h5" fill="none" stroke="#999" strokeWidth=".7" /></svg>
              <span className="ml-[14px] whitespace-nowrap pt-px text-[11.2px] font-bold tracking-[0.05px] text-white">FS-AI ADS-DV STEP v3</span>
            </div>
            <svg className="ml-[3px]" width="36" height="16" viewBox="0 0 36 16"><circle cx="7.300" cy="8" r="7" fill="#128477" /><path d="M5 4.500h4.500M7.200 4.500v7M5 11.500h4.500" stroke="#fff" strokeWidth="1.400" /><circle cx="11.500" cy="12" r="2" fill="#fff" stroke="#333" strokeWidth=".8" /><circle cx="28.500" cy="8.500" r="6" fill="#fff" stroke="#333" strokeWidth="1.100" /><circle cx="28.500" cy="8.500" r="2.300" fill="#333" /></svg>
          </div>
        </div>
        <div className="absolute left-[1666px] top-[124px] flex h-[25px] w-[250px] items-center border border-[#c2c2c2] bg-[#f1f1f1] pl-px pr-1 text-[11.2px] tracking-[-0.35px] text-[#666]">
          <svg width="20" height="14" viewBox="0 0 20 14"><path d="M.5 3v8M2.500 2v10" stroke="#888" /><circle cx="14.500" cy="7" r="4.500" fill="#2d2d2d" /><path d="M12 7h5M14.500 4.500v5" stroke="#fff" strokeWidth="1.300" /></svg>
          <span className="ml-[3px] pt-px">SKETCH PALETTE</span>
          <svg className="ml-auto" width="11" height="8" viewBox="0 0 11 8"><path d="M.5.5v7L5.300 4zM5.700.5v7L10.500 4z" fill="#333" /></svg>
        </div>
        <NavBar />
      </main>
    </div>
  );
}
